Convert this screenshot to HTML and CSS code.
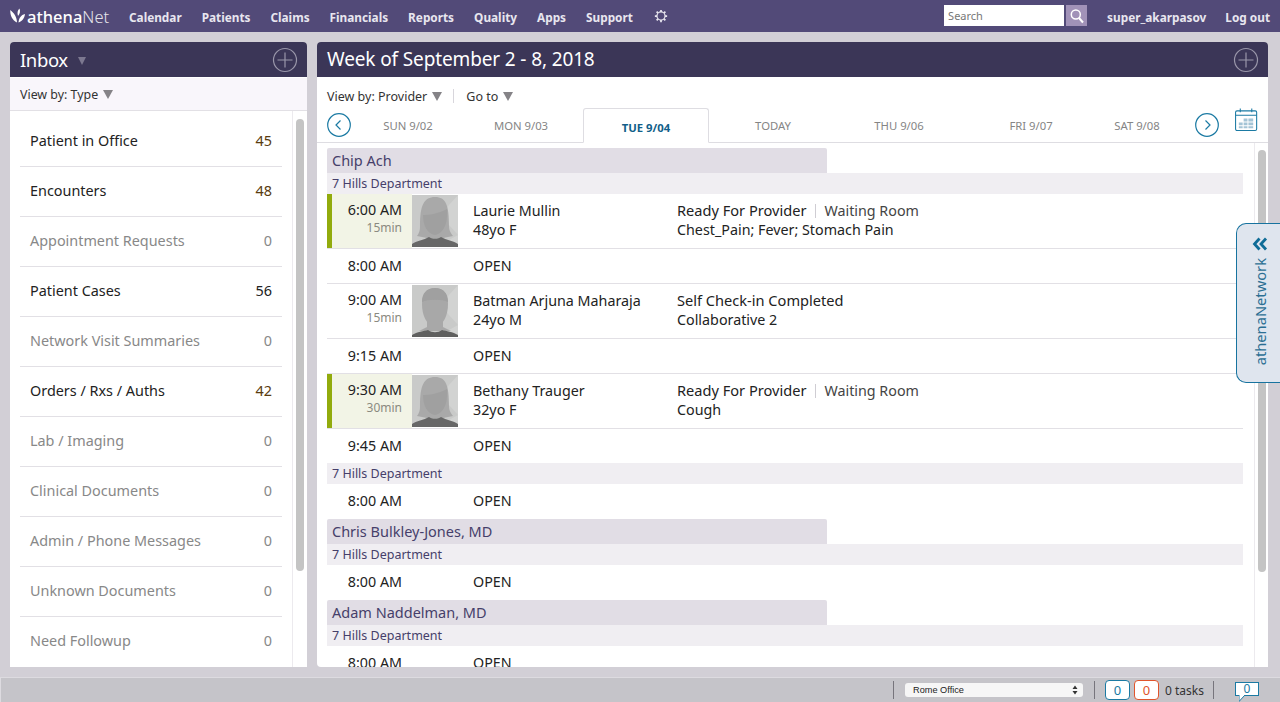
FILE: index.html
```html
<!DOCTYPE html>
<html lang="en">
<head>
<meta charset="utf-8">
<title>athenaNet</title>
<link rel="stylesheet" href="styles.css">
</head>
<body>
<svg class="defs" width="0" height="0" aria-hidden="true">
  <symbol id="av-f" viewBox="0 0 46 52">
    <rect width="46" height="52" fill="#c9cac9"/>
    <path d="M46 0V40L24 52H46Z M46 0L28 20L46 40Z" fill="#d2d3d2"/>
    <path d="M8 31C8 10 12 2 23 2S37 10 37 31C37 36 39 38 41 41L31 43H15L5 41C7 38 8 36 8 31Z" fill="#a9a9a9"/>
    <path d="M11 20C16 20 26 19 35 14C36 26 33 38 23 40C15 39 11 30 11 20Z" fill="#a0a0a0"/>
    <path d="M0 52V49C4 46 12 45 17 42C20 44 26 44 29 42C34 45 42 46 46 49V52Z" fill="#676767"/>
  </symbol>
  <symbol id="av-m" viewBox="0 0 46 52">
    <rect width="46" height="52" fill="#c9cac9"/>
    <path d="M46 0V40L24 52H46Z M46 0L28 20L46 40Z" fill="#d2d3d2"/>
    <path d="M10 19C10 8 15 3 23 3S36 8 36 19C36 31 31 41 23 41S10 31 10 19Z" fill="#a8a8a8"/>
    <path d="M10 17C10 8 15 3 23 3S36 8 36 17C30 14 16 14 10 17Z" fill="#a0a0a0"/>
    <path d="M15 36H31V42L39 46H7L15 42Z" fill="#a8a8a8"/>
    <path d="M0 52V50C5 47 12 46 16 45C20 48 26 48 30 45C34 46 41 47 46 50V52Z" fill="#5f5f5f"/>
  </symbol>
</svg>
<header class="nav">
  <a class="logo">
    <svg class="logo-mark" viewBox="0 0 15 15" width="15" height="15"><path d="M7 14.500C7 9 4 5 .3 2 0 7 2 12 7 14.500Z M8 8C7 5 7.500 2 9.500 .5 10.500 3 10 6 8 8Z M8.500 14.500C9 10 11 7 15 6 14.500 10 12 13.500 8.500 14.500Z" fill="#fff"/></svg>
    <span class="logo-a">athena</span><span class="logo-n">Net</span>
  </a>
  <nav class="menu">
    <a>Calendar</a><a>Patients</a><a>Claims</a><a>Financials</a><a>Reports</a><a>Quality</a><a>Apps</a><a>Support</a>
    <svg class="gear" viewBox="0 0 16 16" width="14" height="14"><g fill="none" stroke="#e8e6ef"><circle cx="8" cy="8" r="4.600" stroke-width="1.400"/><path d="M8 1V3.400M8 12.600V15M1 8H3.400M12.600 8H15M3 3L4.700 4.700M11.300 11.300L13 13M13 3L11.300 4.700M4.700 11.300L3 13" stroke-width="2"/></g></svg>
  </nav>
  <div class="search">
    <input class="search-input" placeholder="Search">
    <button class="search-btn"><svg viewBox="0 0 16 16" width="16" height="16"><circle cx="6.800" cy="6.500" r="4.500" fill="none" stroke="#fff" stroke-width="1.500"/><path d="M10 10L14 14.500" stroke="#fff" stroke-width="2"/></svg></button>
  </div>
  <a class="user">super_akarpasov</a>
  <a class="logout">Log out</a>
</header>

<main class="content">
  <section class="panel inbox">
    <div class="panel-head">
      <h1 class="panel-title title-inbox">Inbox</h1><span class="tri tri-head"></span>
      <svg class="plus" viewBox="0 0 26 26" width="26" height="26"><circle cx="13" cy="13" r="11.500" fill="none" stroke="#9a97aa" stroke-width="1.200"/><path d="M13 5.500V20.500M5.500 13H20.500" stroke="#9a97aa" stroke-width="1.200"/></svg>
    </div>
    <div class="filter">View by: Type<span class="tri"></span></div>
    <div class="inbox-body">
      <ul class="inbox-list">
        <li class="inbox-row active"><span>Patient in Office</span><b class="warm">45</b></li>
        <li class="inbox-row active"><span>Encounters</span><b class="warm">48</b></li>
        <li class="inbox-row"><span>Appointment Requests</span><b>0</b></li>
        <li class="inbox-row active"><span>Patient Cases</span><b>56</b></li>
        <li class="inbox-row"><span>Network Visit Summaries</span><b>0</b></li>
        <li class="inbox-row active"><span>Orders / Rxs / Auths</span><b class="warm">42</b></li>
        <li class="inbox-row"><span>Lab / Imaging</span><b>0</b></li>
        <li class="inbox-row"><span>Clinical Documents</span><b>0</b></li>
        <li class="inbox-row"><span>Admin / Phone Messages</span><b>0</b></li>
        <li class="inbox-row"><span>Unknown Documents</span><b>0</b></li>
        <li class="inbox-row"><span>Need Followup</span><b>0</b></li>
      </ul>
      <div class="scrolltrack track-left"><div class="thumb thumb-left"></div></div>
    </div>
  </section>

  <section class="panel week">
    <div class="panel-head">
      <h1 class="panel-title">Week of September 2 - 8, 2018</h1>
      <svg class="plus" viewBox="0 0 26 26" width="26" height="26"><circle cx="13" cy="13" r="11.500" fill="none" stroke="#9a97aa" stroke-width="1.200"/><path d="M13 5.500V20.500M5.500 13H20.500" stroke="#9a97aa" stroke-width="1.200"/></svg>
    </div>
    <div class="tools">
      <span class="tool">View by: Provider<span class="tri"></span></span>
      <span class="tool-sep"></span>
      <span class="tool">Go to<span class="tri"></span></span>
    </div>
    <div class="tabs">
      <span class="circ"><svg viewBox="0 0 24 24" width="24" height="24"><circle cx="12" cy="12" r="11.300" fill="none" stroke="#1b7aa3" stroke-width="1.200"/><path d="M13.500 7.500L9 12L13.500 16.500" fill="none" stroke="#1b7aa3" stroke-width="1.200"/></svg></span>
      <a class="tab t1">SUN 9/02</a>
      <a class="tab t2">MON 9/03</a>
      <a class="tab current">TUE 9/04</a>
      <a class="tab t4">TODAY</a>
      <a class="tab t5">THU 9/06</a>
      <a class="tab t6">FRI 9/07</a>
      <a class="tab t7">SAT 9/08</a>
      <span class="circ circ-r"><svg viewBox="0 0 24 24" width="24" height="24"><circle cx="12" cy="12" r="11.300" fill="none" stroke="#1b7aa3" stroke-width="1.200"/><path d="M10.500 7.500L15 12L10.500 16.500" fill="none" stroke="#1b7aa3" stroke-width="1.200"/></svg></span>
      <svg class="cal" viewBox="0 0 24 24" width="23" height="23"><rect x=".6" y="3" width="22" height="20.400" rx="1.500" fill="#fff" stroke="#1b7aa3" stroke-width="1.100"/><path d="M.6 7.500H22.600M5.500 .5V4.500M17.500 .5V4.500" stroke="#1b7aa3" stroke-width="1.100"/><path d="M4 15H8V18H4ZM4 19H8V21H4ZM9 11H13V14H9ZM9 15H13V18H9ZM9 19H13V21H9ZM14 11H19V14H14ZM14 15H19V18H14ZM14 19H19V21H14Z" fill="#a4c4d6"/></svg>
    </div>
    <div class="sched-wrap">
      <div class="sched">
        <div class="provider">Chip Ach</div>
        <div class="dept">7 Hills Department</div>
        <div class="appt ready">
          <div class="time">6:00 AM<small>15min</small></div>
          <svg class="avatar"><use href="#av-f"/></svg>
          <div class="who">Laurie Mullin<br>48yo F</div>
          <div class="what"><span class="status">Ready For Provider</span><i></i><span class="room">Waiting Room</span><br>Chest_Pain; Fever; Stomach Pain</div>
        </div>
        <div class="open"><div class="time">8:00 AM</div><div class="who">OPEN</div></div>
        <div class="appt">
          <div class="time">9:00 AM<small>15min</small></div>
          <svg class="avatar"><use href="#av-m"/></svg>
          <div class="who">Batman Arjuna Maharaja<br>24yo M</div>
          <div class="what"><span class="status">Self Check-in Completed</span><br>Collaborative 2</div>
        </div>
        <div class="open"><div class="time">9:15 AM</div><div class="who">OPEN</div></div>
        <div class="appt ready">
          <div class="time">9:30 AM<small>30min</small></div>
          <svg class="avatar"><use href="#av-f"/></svg>
          <div class="who">Bethany Trauger<br>32yo F</div>
          <div class="what"><span class="status">Ready For Provider</span><i></i><span class="room">Waiting Room</span><br>Cough</div>
        </div>
        <div class="open end short"><div class="time">9:45 AM</div><div class="who">OPEN</div></div>
        <div class="dept">7 Hills Department</div>
        <div class="open end"><div class="time">8:00 AM</div><div class="who">OPEN</div></div>
        <div class="provider">Chris Bulkley-Jones, MD</div>
        <div class="dept">7 Hills Department</div>
        <div class="open end"><div class="time">8:00 AM</div><div class="who">OPEN</div></div>
        <div class="provider">Adam Naddelman, MD</div>
        <div class="dept">7 Hills Department</div>
        <div class="open end"><div class="time">8:00 AM</div><div class="who">OPEN</div></div>
      </div>
      <div class="scrolltrack track-right"><div class="thumb thumb-right"></div></div>
    </div>
    <aside class="net-tab">
      <svg viewBox="0 0 16 14" width="16" height="14"><path d="M7.500 1.500L2.500 7L7.500 12.500M14 1.500L9 7L14 12.500" fill="none" stroke="#0f6c97" stroke-width="2.800"/></svg>
      <span class="net-label">athenaNetwork</span>
    </aside>
  </section>
</main>

<footer class="foot">
  <span class="foot-sep"></span>
  <div class="dept-select">Rome Office<svg viewBox="0 0 6 10" width="6" height="10"><path d="M3 .5L5.500 4H.5ZM3 9.500L.5 6H5.500Z" fill="#333"/></svg></div>
  <span class="foot-sep"></span>
  <span class="count blue">0</span>
  <span class="count red">0</span>
  <span class="tasks">0 tasks</span>
  <span class="foot-sep"></span>
  <span class="bubble">0<svg class="bubble-tail" viewBox="0 0 8 7" width="8" height="7"><path d="M0 0V6.500L6 0" fill="#fff" stroke="#1b7aa3"/></svg></span>
</footer>
</body>
</html>
```
FILE: styles.css
```css
* { box-sizing: border-box; }
html, body { margin: 0; height: 100%; }
body {
  width: 1280px; height: 702px; overflow: hidden;
  display: flex; flex-direction: column;
  background: #d2cfd6; color: #222;
  font-family: "Noto Sans", "Liberation Sans", sans-serif;
}
.defs { position: absolute; }
a { color: inherit; text-decoration: none; }

.nav {
  height: 32px; flex: none; display: flex; align-items: center;
  background: #524a78; color: #e8e6ef; padding: 1px 10px 0 10px;
  font-size: 11.800px; font-weight: 700;
}
.logo { display: flex; align-items: center; width: 119px; color: #fff; font-size: 16.500px; font-weight: 400; margin-top: -1px; }
.logo-mark { margin-right: 2px; margin-top: -1px; }
.logo-a { font-weight: 500; }
.logo-n { font-weight: 300; opacity: .85; }
.menu { display: flex; align-items: center; gap: 20px; }
.gear { margin-top: -1px; margin-left: 1px; }
.search { display: flex; margin-left: auto; gap: 2px; margin-top: -2px; }
.search-input {
  width: 120px; height: 21px; border: 0; padding: 0 4px; background: #fff;
  font: 11px "Noto Sans", sans-serif; border-radius: 0;
}
.search-input::placeholder { color: #777; }
.search-btn { width: 21px; height: 21px; border: 0; padding: 2px; background: #a192b8; display: flex; align-items: center; justify-content: center; }
.user { margin-left: 20px; }
.logout { margin-left: 19px; }

.content { flex: none; height: 625px; margin-top: 10px; display: flex; gap: 10px; padding: 0 12px 0 10px; }
.panel { position: relative; background: #fff; border-radius: 4px 4px 0 0; display: flex; flex-direction: column; overflow: visible; }
.inbox { width: 297px; flex: none; }
.week { flex: 1; min-width: 0; border-radius: 4px; }
.panel-head {
  height: 35px; flex: none; background: #3b3657; color: #fff; border-radius: 4px 4px 0 0;
  display: flex; align-items: center; padding: 0 9px 0 10px;
}
.panel-title { margin: 0; font-size: 19px; font-weight: 400; line-height: 37px; letter-spacing: -.13px; }
.title-inbox { font-size: 18.500px; letter-spacing: -.4px; line-height: 35px; }
.plus { margin-left: auto; }
.tri { display: inline-block; width: 0; height: 0; margin-left: 5px; border: 5.500px solid transparent; border-top: 9px solid #858387; border-bottom: 0; }
.tri-head { margin-left: 10px; margin-top: 2px; border-top-color: #7c7890; border-width: 8px 4.500px 0; }

.filter { height: 34px; flex: none; background: #f9f6fb; border-top: 1px solid #fff; border-bottom: 1px solid #e2e0e5; padding-left: 10px; display: flex; align-items: center; font-size: 12.400px; color: #333; }
.inbox-body { flex: 1; min-height: 0; position: relative; display: flex; overflow: hidden; padding: 6px 0 0 10px; }
.inbox-list { list-style: none; margin: 0; padding: 0; width: 262px; flex: none; }
.inbox-row { height: 50px; display: flex; align-items: center; justify-content: space-between; padding: 0 10px 2px; border-bottom: 1px solid #e2e0e5; font-size: 14.400px; color: #888; }
.inbox-row:last-child { border-bottom: 0; height: 49px; }
.inbox-row b { font-weight: 400; }
.inbox-row.active { color: #222; }
.inbox-row .warm { color: #5a3c10; }
.scrolltrack { background: #fff; }
.track-left { position: absolute; top: 0; right: 0; width: 15px; height: 100%; border-left: 1px solid #eceaee; padding: 8px 3px 0; }
.thumb { background: #c4c4c4; border-radius: 4px; width: 8px; }
.thumb-left { height: 452px; }

.tools { height: 31px; flex: none; display: flex; align-items: center; padding: 7px 0 0 10px; font-size: 12.500px; color: #333; }
.tool-sep { width: 1px; height: 14px; background: #d8d6dc; margin: 0 12px 0 11px; }
.tabs { height: 35px; flex: none; display: flex; align-items: center; position: relative; border-bottom: 1px solid #dedde2; padding-left: 10px; font-size: 11.300px; color: #858585; }
.circ { width: 24px; height: 24px; flex: none; display: block; line-height: 0; }
.tab { text-align: center; flex: none; }
.t1 { width: 114px; }
.t2 { width: 112px; margin-right: 6px; }
.current { width: 126px; height: 35px; line-height: 37px; border: 1px solid #dedde2; border-bottom: 1px solid #fff; border-radius: 3px 3px 0 0; color: #125f8a; font-weight: 700; background: #fff; margin-bottom: -1px; }
.t4 { width: 128px; }
.t5 { width: 124px; }
.t6 { width: 140px; }
.t7 { width: 72px; }
.circ-r { margin-left: 22px; }
.cal { margin-left: 16px; margin-top: -12px; }

.sched-wrap { flex: 1; min-height: 0; position: relative; overflow: hidden; padding: 5px 25px 0 10px; }
.provider { width: 500px; height: 25px; background: #e1dde5; border-radius: 2px 2px 0 0; padding-left: 5px; line-height: 25px; font-size: 14.500px; color: #463f6a; }
.dept { height: 21px; background: #f0eef2; padding-left: 5px; line-height: 21px; font-size: 12.500px; color: #463f6a; }
.appt, .open { display: flex; border-bottom: 1px solid #e2e0e5; font-size: 14.300px; line-height: 19px; color: #222; }
.appt { height: 55px; }
.open { height: 35px; }
.open.end { border-bottom: 0; }
.open.short { height: 34px; }
.time { width: 85px; flex: none; padding: 6px 10px 0 0; text-align: right; }
.open .time { padding-top: 7px; }
.time small { display: block; font-size: 12px; color: #8a8a80; line-height: 16px; margin-top: 1px; }
.ready .time { border-left: 5px solid #92ab0d; background: #f2f4e6; height: 54px; }
.avatar { width: 46px; height: 52px; flex: none; margin-top: 1px; }
.who { flex: none; width: 204px; margin-left: 15px; padding-top: 7px; }
.open .who { margin-left: 61px; }
.what { padding-top: 7px; }
.status { font-size: 14.600px; }
.what i { display: inline-block; width: 1px; height: 14px; background: #cfcdd3; margin: 0 8px 0 9px; vertical-align: -2px; }
.room { color: #444; font-size: 14.300px; }
.track-right { position: absolute; top: 0; right: 0; width: 14px; height: 100%; border-left: 1px solid #eceaee; padding: 7px 3px 0; }
.thumb-right { height: 422px; }

.net-tab {
  position: absolute; top: 181px; right: -12px; width: 44px; height: 160px;
  background: #dfe5ee; border: 1px solid #17739f; border-right: 0; border-radius: 10px 0 0 10px;
  display: flex; flex-direction: column; align-items: center; padding: 13px 0 0 3px; gap: 7px; z-index: 2;
}
.net-label { writing-mode: vertical-rl; transform: rotate(180deg); font-size: 14.700px; line-height: 16px; color: #2c6f93; }

.foot {
  height: 25px; flex: none; margin-top: 10px; display: flex; align-items: center; justify-content: flex-end;
  background: #c5c4c9; border-top: 1px solid #dddbe0; border-left: 1px solid #dddbe0; padding-right: 21px; font-size: 12px; color: #333;
}
.foot-sep { width: 1px; height: 18px; background: #77757c; }
.dept-select { width: 178px; height: 14px; margin: 0 11px; background: #f6f6f6; border-radius: 3px; padding: 0 5px 0 8px; display: flex; align-items: center; justify-content: space-between; font: 9.200px/14px "Liberation Sans", sans-serif; color: #222; }
.count { width: 25px; height: 20px; border-radius: 4px; background: #fff; display: flex; align-items: center; justify-content: center; font-size: 13px; margin-left: 4px; }
.foot-sep + .count { margin-left: 10px; }
.blue { border: 1px solid #1b7aa3; color: #1b7aa3; }
.red { border: 1px solid #e0552c; color: #e0552c; }
.tasks { margin: 0 9px 0 6px; }
.bubble { position: relative; width: 24px; height: 14px; margin-left: 21px; margin-top: -3px; background: #fff; border: 1px solid #1b7aa3; display: flex; align-items: center; justify-content: center; font-size: 12px; line-height: 12px; color: #1b7aa3; }
.bubble-tail { position: absolute; left: 3px; bottom: -7px; }
```
